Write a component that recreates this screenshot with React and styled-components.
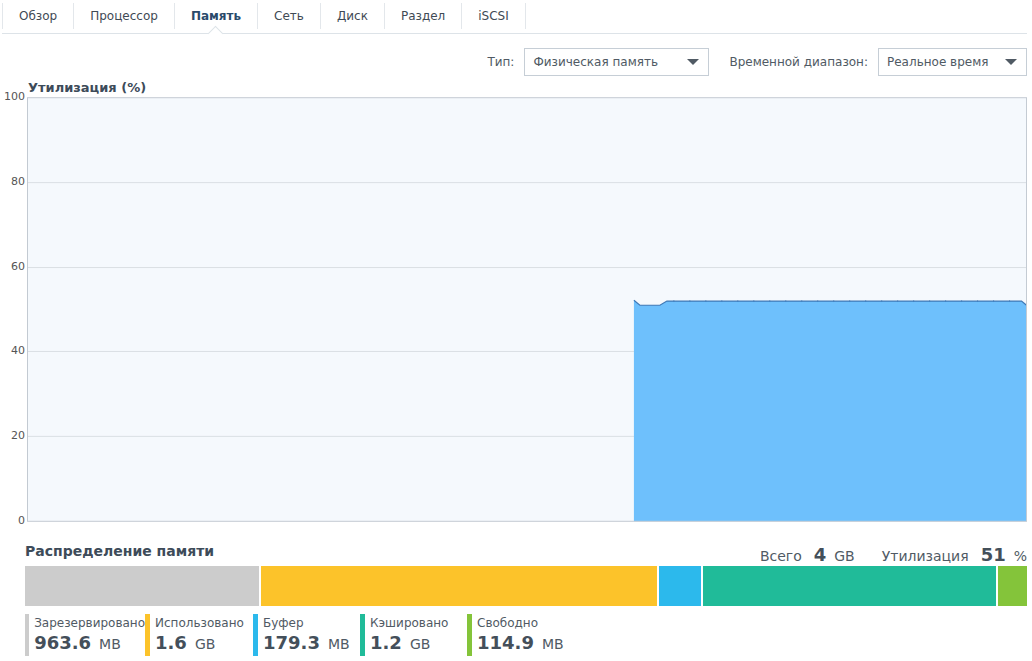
import React from "react";
import styled, { createGlobalStyle } from "styled-components";

const Global = createGlobalStyle`
  html, body { margin: 0; padding: 0; background: #fff; }
  body { font-family: "DejaVu Sans", Verdana, sans-serif; font-size: 12px; color: #505a64; }
`;

const Page = styled.div`
  width: 1032px;
  height: 661px;
  overflow: hidden;
  box-sizing: border-box;
  padding: 0 5px 0 2px;
`;

const TabBar = styled.div`
  position: relative;
  display: flex;
  height: 33px;
  border-bottom: 1px solid #dde3e8;
`;

const Tab = styled.div`
  position: relative;
  display: flex;
  align-items: center;
  padding: 0 16px 0 16px;
  border-left: 1px solid #e3e7eb;
  margin: 3px 0 4px;
  font-size: 12px;
  color: ${(p) => (p.$active ? "#2a4a6b" : "#3f4a55")};
  font-weight: ${(p) => (p.$active ? "bold" : "normal")};
  &:last-child { border-right: 1px solid #e3e7eb; }
`;

const Notch = styled.span`
  position: absolute;
  left: 50%;
  width: 10px;
  height: 10px;
  margin-left: -6px;
  background: #fff;
  border-left: 1px solid #dde3e8;
  border-top: 1px solid #dde3e8;
  transform: rotate(45deg);
  bottom: -10px;
`;

const Toolbar = styled.div`
  display: flex;
  justify-content: flex-end;
  align-items: center;
  margin-top: 14px;
  height: 28px;
`;

const Label = styled.span`
  font-size: 12px;
  color: #505a64;
  margin: 0 10px 0 20px;
`;

const Select = styled.div`
  box-sizing: border-box;
  width: ${(p) => p.$w}px;
  height: 28px;
  border: 1px solid #c6ced6;
  display: flex;
  align-items: center;
  justify-content: space-between;
  padding: 0 9px 0 8px;
  font-size: 12px;
  color: #505a64;
`;

const Caret = styled.span`
  width: 0;
  height: 0;
  border-left: 6px solid transparent;
  border-right: 6px solid transparent;
  border-top: 6px solid #505a64;
`;

const ChartTitle = styled.div`
  margin: 4px 0 0 26px;
  font-size: 13px;
  font-weight: bold;
  color: #3d4b59;
  line-height: 15px;
`;

const ChartRow = styled.div`
  display: flex;
  margin-top: 2px;
  height: 430px;
`;

const Axis = styled.div`
  position: relative;
  width: 25px;
  height: 430px;
`;

const Tick = styled.span`
  position: absolute;
  right: 2px;
  font-size: 11px;
  color: #555;
  transform: translateY(-60%);
`;

const Plot = styled.svg`
  display: block;
  width: 1001px;
  height: 425px;
`;

const DistHeader = styled.div`
  display: flex;
  align-items: flex-end;
  justify-content: space-between;
  margin: 16px 0 0 23px;
  height: 23px;
`;

const DistTitle = styled.div`
  font-size: 14px;
  font-weight: bold;
  color: #3d4b59;
  line-height: 20px;
  margin-bottom: 5px;
`;

const Summary = styled.div`
  display: flex;
  align-items: baseline;
  font-size: 14px;
  color: #505a64;
  line-height: 20px;
`;

const SumLabel = styled.span`
  margin-left: ${(p) => p.$ml || 0}px;
`;

const BigNum = styled.span`
  font-size: 18px;
  font-weight: bold;
  color: #444f5a;
  margin: 0 8px 0 ${(p) => p.$ml || 12}px;
`;

const Bar = styled.div`
  display: flex;
  gap: 2px;
  height: 40px;
  margin: 0 0 0 23px;
`;

const Seg = styled.div`
  background: ${(p) => p.$c};
`;

const Legend = styled.div`
  display: flex;
  margin: 8px 0 0 23px;
`;

const Item = styled.div`
  display: flex;
`;

const Swatch = styled.div`
  width: 5px;
  height: 42px;
  background: ${(p) => p.$c};
  margin-right: 5px;
`;

const ItemText = styled.div`
  display: flex;
  flex-direction: column;
`;

const ItemLabel = styled.div`
  font-size: 12px;
  color: #505a64;
  line-height: 16px;
  margin-top: 1px;
`;

const ItemValue = styled.div`
  display: flex;
  align-items: baseline;
  line-height: 24px;
`;

const ValNum = styled.span`
  font-size: 18px;
  font-weight: bold;
  color: #444f5a;
`;

const ValUnit = styled.span`
  font-size: 14px;
  color: #505a64;
  margin-left: 8px;
`;

const tabs = ["Обзор", "Процессор", "Память", "Сеть", "Диск", "Раздел", "iSCSI"];

const legend = [
  { c: "#cccccc", l: "Зарезервировано", v: "963.6", u: "MB", w: 120 },
  { c: "#fcc32a", l: "Использовано", v: "1.6", u: "GB", w: 108 },
  { c: "#2cb9ec", l: "Буфер", v: "179.3", u: "MB", w: 107 },
  { c: "#20bb99", l: "Кэшировано", v: "1.2", u: "GB", w: 107 },
  { c: "#84c43a", l: "Свободно", v: "114.9", u: "MB", w: 100 },
];

const segs = [
  { c: "#cccccc", w: 234 },
  { c: "#fcc32a", w: 396 },
  { c: "#2cb9ec", w: 42 },
  { c: "#20bb99", w: 293 },
  { c: "#84c43a", w: 29 },
];

export default function App() {
  const H = 424;
  const y = (v) => H - (v / 100) * H;
  const x0 = 607;
  const pts = `M${x0},${y(52.2)} L${x0 + 6},${y(51)} L${x0 + 26},${y(51)} L${x0 + 33},${y(52)} L995,${y(52)} L1000,${y(51)}`;
  const area = `${pts} L1000,${H} L${x0},${H} Z`;
  const ticks = [];
  for (let x = x0 + 40; x < 995; x += 16) ticks.push(x);
  return (
    <>
      <Global />
      <Page>
        <TabBar>
          {tabs.map((t, i) => (
            <Tab key={t} $active={i === 2}>
              {t}
              {i === 2 && <Notch />}
            </Tab>
          ))}
        </TabBar>
        <Toolbar>
          <Label>Тип:</Label>
          <Select $w={185}>
            Физическая память
            <Caret />
          </Select>
          <Label>Временной диапазон:</Label>
          <Select $w={149}>
            Реальное время
            <Caret />
          </Select>
        </Toolbar>
        <ChartTitle>Утилизация (%)</ChartTitle>
        <ChartRow>
          <Axis>
            {[100, 80, 60, 40, 20, 0].map((v) => (
              <Tick key={v} style={{ top: `${y(v) + 1}px` }}>
                {v}
              </Tick>
            ))}
          </Axis>
          <Plot viewBox="-0.5 -0.5 1001 425">
            <rect x="0" y="0" width="1000" height={H} fill="#f5f9fd" />
            {[80, 60, 40, 20].map((v) => (
              <line key={v} x1="0" x2="1000" y1={Math.round(y(v))} y2={Math.round(y(v))} stroke="#dadfe4" strokeWidth="1" />
            ))}
            <path d={area} fill="#6ec0fc" />
            <path d={pts} fill="none" stroke="#3f78b5" strokeWidth="1.2" />
            {ticks.map((tx) => (
              <line key={tx} x1={tx} x2={tx} y1={y(52) - 1} y2={y(52) + 1} stroke="#3f78b5" strokeWidth="0.6" />
            ))}
            <rect x="0" y="0" width="1000" height={H} fill="none" stroke="#c3cad2" strokeWidth="1" />
          </Plot>
        </ChartRow>
        <DistHeader>
          <DistTitle>Распределение памяти</DistTitle>
          <Summary>
            <SumLabel>Всего</SumLabel>
            <BigNum>4</BigNum>
            <SumLabel>GB</SumLabel>
            <SumLabel $ml={27}>Утилизация</SumLabel>
            <BigNum $ml={12}>51</BigNum>
            <SumLabel>%</SumLabel>
          </Summary>
        </DistHeader>
        <Bar>
          {segs.map((s, i) => (
            <Seg key={i} $c={s.c} style={{ width: `${s.w}px` }} />
          ))}
        </Bar>
        <Legend>
          {legend.map((it) => (
            <Item key={it.l} style={{ width: `${it.w}px` }}>
              <Swatch $c={it.c} />
              <ItemText>
                <ItemLabel>{it.l}</ItemLabel>
                <ItemValue>
                  <ValNum>{it.v}</ValNum>
                  <ValUnit>{it.u}</ValUnit>
                </ItemValue>
              </ItemText>
            </Item>
          ))}
        </Legend>
      </Page>
    </>
  );
}
